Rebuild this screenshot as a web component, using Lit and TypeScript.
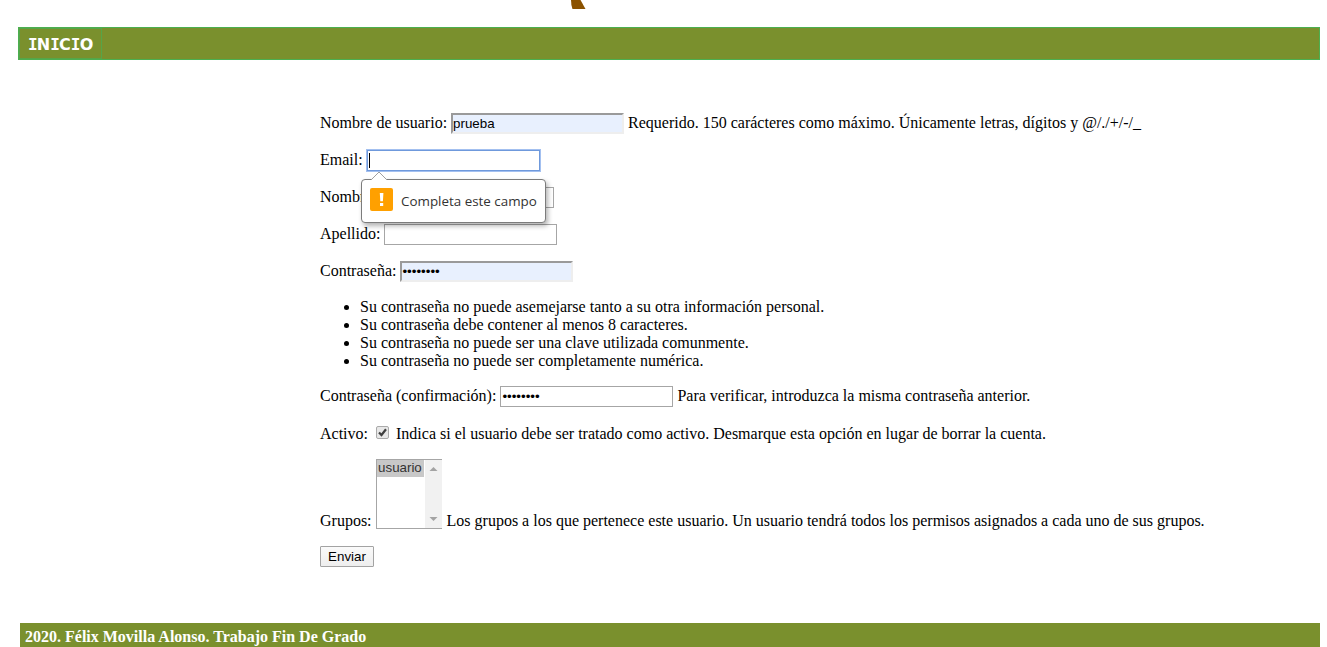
import { LitElement, html, css } from "lit";
import { customElement } from "lit/decorators.js";

const PASSWORD_RULES = [
  "Su contraseña no puede asemejarse tanto a su otra información personal.",
  "Su contraseña debe contener al menos 8 caracteres.",
  "Su contraseña no puede ser una clave utilizada comunmente.",
  "Su contraseña no puede ser completamente numérica.",
];

@customElement("app-root")
export class AppRoot extends LitElement {
  static styles = css`
    :host {
      display: flex;
      flex-direction: column;
      box-sizing: border-box;
      height: 647px;
      overflow: hidden;
      padding: 0 7px 0 18px;
      background: #fff;
      color: #000;
      font: 16px/18px "Liberation Serif", "Times New Roman", serif;
    }
    .logo { height: 27px; padding-left: 553px; }
    .logo svg { display: block; }
    nav {
      box-sizing: border-box;
      width: 1302px;
      height: 33px;
      display: flex;
      background: #7a902d;
      border: 1px solid #4caf50;
      flex: none;
    }
    nav a {
      box-sizing: border-box;
      height: 31px;
      width: 83px;
      padding: 0 0 0 8px;
      border: 1px solid #56a548;
      color: #fff;
      font: bold 16px/31px "DejaVu Sans", Verdana, sans-serif;
      white-space: nowrap;
    }
    nav .i { font-family: "DejaVu Sans Mono", monospace; letter-spacing: -0.8px; }
    form { margin: 53px 0 0 302px; display: flex; flex-direction: column; gap: 16px; }
    .row { display: flex; height: 21px; align-items: center; gap: 4px; white-space: nowrap; position: relative; }
    .row > label, .row > .help { padding-bottom: 2px; }
    .row.list-row { height: 70px; align-items: flex-end; margin: -1px 0 1px; }
    .row.list-row > span { margin-bottom: -1px; }
    .row.check > label, .row.check > .help { padding: 1px 0 0; }
    input.text {
      box-sizing: border-box;
      width: 173px;
      height: 21px;
      margin: 0;
      padding: 1px;
      appearance: none;
      border: 1px solid #a6a6a6;
      border-radius: 0;
      outline: none;
      background: #fff;
      color: #000;
      font: 13.333px "Liberation Sans", Arial, sans-serif;
    }
    input.filled {
      background: #e8f0fe;
      border: 2px solid;
      border-color: #9a9a9a #eeeeee #eeeeee #9a9a9a;
      padding: 1px 0;
    }
    .focus { display: flex; position: relative; }
    .focus input { border-color: #6f99dc; box-shadow: 0 0 0 1px #a3c0f0; }
    .caret { position: absolute; left: 2px; top: 3px; width: 1px; height: 15px; background: #000; }
    .bubble {
      position: absolute;
      left: 41px;
      top: 29px;
      z-index: 2;
      box-sizing: border-box;
      width: 185px;
      height: 44px;
      display: flex;
      gap: 8px;
      padding: 8px 0 0 8px;
      background: #fff;
      border: 1px solid #7c7c7c;
      border-radius: 4px;
      box-shadow: 2px 3px 5px rgba(0, 0, 0, 0.3);
      color: #333;
      font: 13.4px/26px "Open Sans", "Segoe UI", sans-serif;
    }
    .bubble .tip { position: absolute; left: 8px; top: -9px; }
    .bubble svg { flex: none; }
    ul { margin: 0; padding: 0 0 0 40px; }
    .box { display: block; margin: -2px 3px 0 4px; }
    .select {
      box-sizing: border-box;
      width: 66px;
      height: 70px;
      margin: 0 1px 0 0;
      display: flex;
      border: 1px solid #a6a6a6;
      border-right: 0;
      font: 13.333px/16px "Liberation Sans", Arial, sans-serif;
      color: #333;
    }
    .option { width: 47px; height: 17px; padding-left: 1.5px; box-sizing: border-box; background: #c8c8c8; }
    .scroll { width: 17px; margin-left: 1px; background: #f1f1f1; }
    .scroll svg { display: block; }
    button {
      width: 54px;
      height: 21px;
      box-sizing: border-box;
      padding: 0;
      border: 1px solid #a3a3a3;
      border-radius: 1px;
      background: linear-gradient(#fafafa, #eeeeee);
      color: #000;
      font: 13.333px/19px "Liberation Sans", Arial, sans-serif;
    }
    footer {
      margin: auto 0 0 2px;
      box-sizing: border-box;
      width: 1300px;
      height: 24px;
      padding: 5px 0 0 5px;
      background: #7a902d;
      color: #fff;
      font-weight: bold;
      flex: none;
    }
  `;

  render() {
    return html`
      <div class="logo">
        <svg width="16" height="9"><path d="M0 0H9.5L14.5 9H1.5Q0 5 0 0Z" fill="#8b5200" /></svg>
      </div>
      <nav><a><span class="i">I</span>N<span class="i">I</span>C<span class="i">I</span>O</a></nav>
      <form @submit=${(e: Event) => e.preventDefault()}>
        <div class="row">
          <label>Nombre de usuario:</label>
          <input class="text filled" value="prueba" />
          <span class="help">Requerido. 150 carácteres como máximo. Únicamente letras, dígitos y @/./+/-/_</span>
        </div>
        <div class="row">
          <label>Email:</label>
          <span class="focus"><input class="text" /><i class="caret"></i></span>
          <div class="bubble">
            <svg class="tip" width="18" height="9"><path d="M1 9L9 1L17 9" fill="#fff" stroke="#a0a0a0" /></svg>
            <svg width="23" height="23"><rect width="23" height="23" rx="2" fill="#ffa000" /><path d="M9.8 5H13.4L12.9 13.2H10.3ZM10 15H13.2V18H10Z" fill="#fff" /></svg>
            <span>Completa este campo</span>
          </div>
        </div>
        <div class="row"><label>Nombre:</label><input class="text" /></div>
        <div class="row"><label>Apellido:</label><input class="text" /></div>
        <div class="row"><label>Contraseña:</label><input class="text filled" type="password" value="12345678" /></div>
        <ul>${PASSWORD_RULES.map((rule) => html`<li>${rule}</li>`)}</ul>
        <div class="row">
          <label>Contraseña (confirmación):</label>
          <input class="text" type="password" value="12345678" />
          <span class="help">Para verificar, introduzca la misma contraseña anterior.</span>
        </div>
        <div class="row check">
          <label>Activo:</label>
          <svg class="box" width="13" height="13">
            <rect x=".5" y=".5" width="12" height="12" rx="1.5" fill="#e8e8e8" stroke="#aaa" />
            <path d="M3 6.5L5.5 9L10 3.3" fill="none" stroke="#404040" stroke-width="2.2" />
          </svg>
          <span class="help">Indica si el usuario debe ser tratado como activo. Desmarque esta opción en lugar de borrar la cuenta.</span>
        </div>
        <div class="row list-row">
          <span>Grupos:</span>
          <div class="select">
            <div class="option">usuario</div>
            <div class="scroll">
              <svg width="17" height="68"><path d="M4.5 11L8.5 7L12.5 11ZM4.5 57L8.5 61L12.5 57Z" fill="#a3a3a3" /></svg>
            </div>
          </div>
          <span>Los grupos a los que pertenece este usuario. Un usuario tendrá todos los permisos asignados a cada uno de sus grupos.</span>
        </div>
        <button>Enviar</button>
      </form>
      <footer>2020. Félix Movilla Alonso. Trabajo Fin De Grado</footer>
    `;
  }
}
